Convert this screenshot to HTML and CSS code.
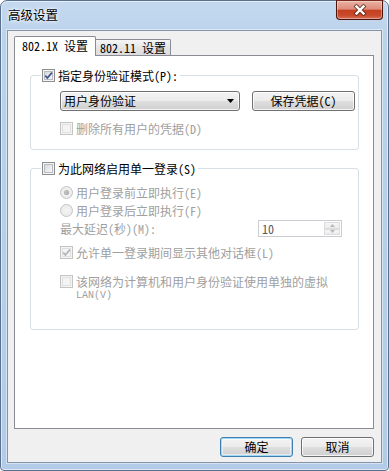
FILE: index.html
```html
<!DOCTYPE html>
<html lang="zh-CN">
<head>
<meta charset="utf-8">
<title>高级设置</title>
<link rel="stylesheet" href="styles.css">
</head>
<body>
<div class="window">
  <div class="titlebar">
    <span class="title">高级设置</span>
    <div class="close">
      <svg width="14" height="12" viewBox="0 0 14 12"><path d="M3.5 2.5 L10.5 9.5 M10.5 2.5 L3.5 9.5" stroke="#4a2018" stroke-width="4.2" stroke-linecap="square" fill="none" opacity="0.75"/><path d="M3.5 2.5 L10.5 9.5 M10.5 2.5 L3.5 9.5" stroke="#fff" stroke-width="2.4" stroke-linecap="square" fill="none"/></svg>
    </div>
  </div>
  <div class="client">
    <div class="tabs">
      <div class="tab active">802.1X 设置</div>
      <div class="tab inactive">802.11 设置</div>
    </div>
    <div class="panel">
      <fieldset class="group g1">
        <legend><span class="check"><span class="cb"><svg width="9" height="9" viewBox="0 0 9 9"><path d="M1.2 4.6 L3.4 7 L7.9 1.6" stroke="#3f5688" stroke-width="1.7" fill="none"/></svg></span>指定身份验证模式(P):</span></legend>
        <div class="row combo-row">
          <div class="combo"><span>用户身份验证</span><svg class="arrow" width="7" height="4" viewBox="0 0 7 4"><path d="M0 0 H7 L3.5 4 Z" fill="#000"/></svg></div>
          <div class="btn save">保存凭据(C)</div>
        </div>
        <div class="row check disabled r-del"><span class="cb"></span>删除所有用户的凭据(D)</div>
      </fieldset>
      <fieldset class="group g2">
        <legend><span class="check"><span class="cb"></span>为此网络启用单一登录(S)</span></legend>
        <div class="row check disabled r-rad1"><span class="rd on"></span>用户登录前立即执行(E)</div>
        <div class="row check disabled r-rad2"><span class="rd"></span>用户登录后立即执行(F)</div>
        <div class="row delay-row disabled">
          <span class="delay-label">最大延迟(秒)(M):</span>
          <div class="spin"><span class="val">10</span><span class="arrows"><span class="sa"><svg width="5" height="3" viewBox="0 0 5 3"><path d="M0 3 H5 L2.5 0 Z" fill="#b9b9b9"/></svg></span><span class="sa"><svg width="5" height="3" viewBox="0 0 5 3"><path d="M0 0 H5 L2.5 3 Z" fill="#b9b9b9"/></svg></span></span></div>
        </div>
        <div class="row check disabled r-allow"><span class="cb"><svg width="9" height="9" viewBox="0 0 9 9"><path d="M1.2 4.6 L3.4 7 L7.9 1.6" stroke="#b4b4b4" stroke-width="1.7" fill="none"/></svg></span>允许单一登录期间显示其他对话框(L)</div>
        <div class="row check multi disabled r-vlan"><span class="cb"></span><span class="lines"><span class="ln ln1">该网络为计算机和用户身份验证使用单独的虚拟</span><span class="ln ln2">LAN(V)</span></span></div>
      </fieldset>
    </div>
    <div class="footer">
      <div class="btn default">确定</div>
      <div class="btn">取消</div>
    </div>
  </div>
</div>
</body>
</html>
```
FILE: styles.css
```css
html, body {
  margin: 0;
  background: #ffffff;
}
body {
  font-family: "Noto Sans Mono CJK SC", "Noto Sans CJK SC", sans-serif;
  font-size: 12px;
  color: #000;
}
.window {
  box-sizing: border-box;
  width: 389px;
  height: 471px;
  border: 1px solid #5a7290;
  border-radius: 7px 7px 4px 4px;
  background: linear-gradient(to bottom, #c4d9ef 0, #bbd2eb 40px, #b3cbe7 100%);
  box-shadow: inset 0 0 0 1px rgba(255,255,255,0.55);
  padding: 0 6px 7px 6px;
  display: flex;
  flex-direction: column;
}
.titlebar {
  flex: none;
  height: 29px;
  display: flex;
  align-items: flex-start;
}
.title {
  padding-left: 1px;
  height: 29px;
  line-height: 28px;
  font-size: 12.5px;
  text-shadow: 0 0 5px #fff, 0 0 3px #fff;
}
.close {
  box-sizing: border-box;
  margin: -1px -1px 0 auto;
  width: 47px;
  height: 20px;
  border: 1px solid #4b1309;
  border-top-color: #7a2a1c;
  border-radius: 0 0 4px 4px;
  background: linear-gradient(to bottom, #eab1a3 0%, #dd8d7a 45%, #c6401f 52%, #c84a2c 80%, #d8705a 100%);
  box-shadow: inset 0 0 0 1px rgba(255,255,255,0.35);
  display: flex;
  align-items: center;
  justify-content: center;
}
.client {
  flex: 1;
  box-sizing: border-box;
  border: 1px solid #8594a8;
  background: #f0f0f0;
  padding: 5px 7px 5px 6px;
  display: flex;
  flex-direction: column;
  box-shadow: 0 0 0 1px rgba(255,255,255,0.45);
}
.tabs {
  flex: none;
  height: 19px;
  display: flex;
  align-items: flex-end;
}
.tab {
  box-sizing: border-box;
  border: 1px solid #898c95;
  border-bottom: none;
  border-radius: 2px 2px 0 0;
  text-align: center;
  white-space: nowrap;
}
.tab.active {
  width: 82px;
  height: 20px;
  margin-bottom: -1px;
  line-height: 18px;
  background: #fff;
  position: relative;
  z-index: 1;
}
.tab.inactive {
  width: 75px;
  height: 16px;
  line-height: 15px;
  border-left: none;
  border-radius: 0 2px 0 0;
  background: linear-gradient(to bottom, #f6f6f6, #e4e4e4 55%, #dcdcdc);
}
.panel {
  flex: 1;
  box-sizing: border-box;
  background: #fff;
  border: 1px solid #898c95;
  padding: 0 14px 0 15px;
}
.group {
  margin: 0;
  border: 1px solid #d5dfe5;
  border-radius: 3px;
  padding: 0 0 13px 11px;
  min-width: 0;
}
.g1 { margin-top: 12px; }
.g2 { margin-top: 11px; padding-bottom: 27px; }
legend {
  padding: 0 2px 0 1px;
  margin-left: -1px;
  height: 15px;
}
.check {
  display: flex;
  align-items: center;
  gap: 3px;
  height: 15px;
  line-height: 15px;
  white-space: nowrap;
}
.row { margin-left: 18px; }
.disabled { color: #a0a0a0; }

.cb {
  flex: none;
  box-sizing: border-box;
  width: 13px;
  height: 13px;
  border: 1px solid #8e8f8f;
  background: linear-gradient(135deg, #cdd1d6 0%, #eceef0 60%, #fafafa 100%);
  box-shadow: inset 0 0 0 1px #f4f4f4, inset 0 0 0 2px #b9bdc3;
  display: flex;
  align-items: center;
  justify-content: center;
}
.disabled .cb {
  border-color: #c4c4c4;
  background: #f4f4f4;
  box-shadow: inset 0 0 0 1px #f4f4f4, inset 0 0 0 2px #e0e0e0;
}
.rd {
  flex: none;
  box-sizing: border-box;
  width: 13px;
  height: 13px;
  border-radius: 50%;
  border: 1px solid #c4c4c4;
  background: radial-gradient(circle at 50% 50%, #f4f4f4 0, #e8e8e8 100%);
  display: flex;
  align-items: center;
  justify-content: center;
}
.rd.on::before {
  content: "";
  width: 5px;
  height: 5px;
  border-radius: 50%;
  background: radial-gradient(circle at 40% 40%, #c8c8c8, #9a9a9a);
}

.combo-row {
  display: flex;
  gap: 12px;
  margin-top: 8px;
  height: 20px;
}
.combo, .btn {
  box-sizing: border-box;
  height: 20px;
  border: 1px solid #707070;
  border-radius: 3px;
  background: linear-gradient(to bottom, #f4f4f4 0%, #ebebeb 48%, #dedede 52%, #d0d0d0 100%);
  box-shadow: inset 0 0 0 1px rgba(255,255,255,0.75);
}
.combo {
  width: 180px;
  display: flex;
  align-items: center;
  padding: 0 5px 0 3px;
  line-height: 18px;
}
.combo .arrow { margin-left: auto; }
.btn {
  display: flex;
  align-items: center;
  justify-content: center;
  line-height: 18px;
}
.save { width: 103px; }
.r-del { margin-top: 10px; }

.r-rad1 { margin-top: 9px; }
.r-rad2 { margin-top: 3px; }
.delay-row {
  margin-top: 2px;
  height: 17px;
  display: flex;
  align-items: center;
}
.delay-label { width: 198px; }
.spin {
  box-sizing: border-box;
  width: 84px;
  height: 17px;
  border: 1px solid #c9ccd1;
  background: #fff;
  display: flex;
}
.spin .val {
  flex: 1;
  padding-left: 3px;
  line-height: 15px;
  color: #5a5a5a;
}
.spin .arrows {
  width: 16px;
  display: flex;
  flex-direction: column;
  margin: 1px 1px 1px 0;
}
.sa {
  flex: 1;
  box-sizing: border-box;
  border: 1px solid #dcdcdc;
  background: linear-gradient(#f7f7f7, #ececec);
  display: flex;
  align-items: center;
  justify-content: center;
}
.r-allow { margin-top: 8px; }
.r-vlan {
  margin-top: 13px;
  height: auto;
  align-items: flex-start;
}
.r-vlan .cb { margin-top: 2px; }
.lines {
  display: flex;
  flex-direction: column;
}
.ln { display: block; }
.ln1 {
  height: 17px;
  line-height: 17px;
}
.ln2 {
  height: 12px;
  line-height: 12px;
  font-family: "Liberation Mono", monospace;
  font-size: 10px;
}

.footer {
  flex: none;
  display: flex;
  justify-content: flex-end;
  gap: 8px;
  margin-top: 8px;
  height: 20px;
}
.footer .btn { width: 73px; }
.btn.default {
  border-color: #3c7fb1;
  box-shadow: inset 0 0 0 1px #9fd9f6, inset 0 0 0 2px rgba(255,255,255,0.5);
}
```
